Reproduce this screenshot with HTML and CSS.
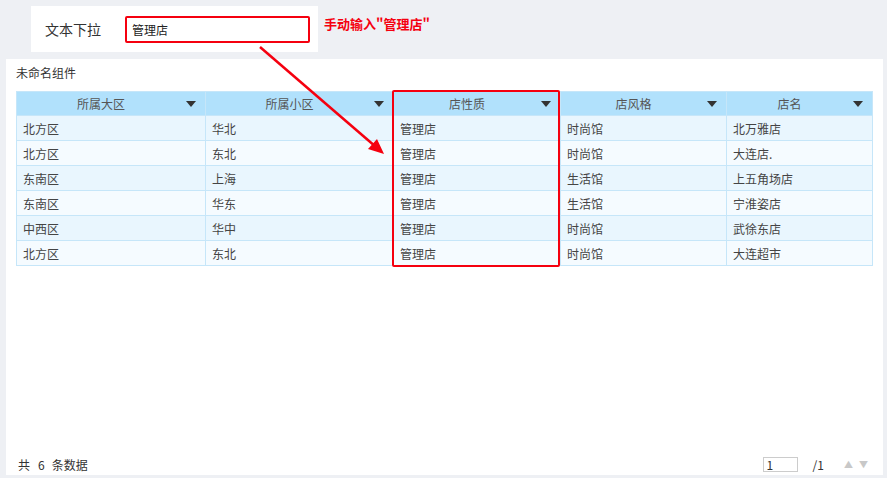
FILE: index.html
```html
<!DOCTYPE html>
<html lang="zh-CN">
<head>
  <meta charset="UTF-8">
  <title>文本下拉</title>
  <link rel="stylesheet" href="styles.css">
</head>
<body>

  <div class="filter-bar">
    <div class="filter-box">
      <span class="filter-label">文本下拉</span>
      <div class="filter-input">管理店</div>
    </div>
    <span class="note">手动输入"管理店"</span>
  </div>

  <div class="panel">
    <div class="panel-title">未命名组件</div>
    <table class="grid">
      <colgroup>
        <col style="width:189px">
        <col style="width:188px">
        <col style="width:167px">
        <col style="width:166px">
        <col style="width:146px">
      </colgroup>
      <thead>
        <tr>
          <th>所属大区<i class="caret"></i></th>
          <th>所属小区<i class="caret"></i></th>
          <th>店性质<i class="caret"></i></th>
          <th>店风格<i class="caret"></i></th>
          <th>店名<i class="caret"></i></th>
        </tr>
      </thead>
      <tbody>
        <tr><td>北方区</td><td>华北</td><td>管理店</td><td>时尚馆</td><td>北万雅店</td></tr>
        <tr><td>北方区</td><td>东北</td><td>管理店</td><td>时尚馆</td><td>大连店.</td></tr>
        <tr><td>东南区</td><td>上海</td><td>管理店</td><td>生活馆</td><td>上五角场店</td></tr>
        <tr><td>东南区</td><td>华东</td><td>管理店</td><td>生活馆</td><td>宁淮姿店</td></tr>
        <tr><td>中西区</td><td>华中</td><td>管理店</td><td>时尚馆</td><td>武徐东店</td></tr>
        <tr><td>北方区</td><td>东北</td><td>管理店</td><td>时尚馆</td><td>大连超市</td></tr>
      </tbody>
    </table>

    <div class="pager">
      <span class="count">共<b>6</b>条数据</span>
      <div class="pages">
        <span class="page-input">1</span>
        <span class="page-total">/1</span>
        <span class="page-arrow">▲</span>
        <span class="page-arrow">▼</span>
      </div>
    </div>
  </div>

  <!-- 标注：红框 + 箭头 -->
  <div class="mark-col"></div>
  <svg class="mark-arrow" width="887" height="478" viewBox="0 0 887 478">
    <line x1="260" y1="47" x2="376" y2="147" stroke="#f5000f" stroke-width="2.5"/>
    <polygon points="384,154 368,149 377,139" fill="#f5000f"/>
  </svg>

</body>
</html>
```

FILE: styles.css
```css
body {
  margin: 0;
  width: 887px;
  height: 478px;
  background-color: #eef0f4;
  font-family: "Noto Sans CJK SC", "Noto Sans", sans-serif;
  color: #333;
  overflow: hidden;
  position: relative;
}

.filter-bar {
  display: flex;
  align-items: flex-start;
  padding: 6px 0 0 31px;
}

.filter-box {
  display: flex;
  align-items: center;
  width: 287px;
  height: 46px;
  background-color: #fff;
  box-sizing: border-box;
  padding-left: 14px;
}

.filter-label {
  font-size: 14px;
  color: #333;
  width: 80px;
}

.filter-input {
  width: 185px;
  height: 27px;
  box-sizing: border-box;
  border: 2px solid #f5000f;
  border-radius: 2px;
  font-size: 12px;
  line-height: 23px;
  padding-left: 5px;
  color: #222;
}

.note {
  margin: 8px 0 0 6px;
  font-size: 13px;
  font-weight: bold;
  color: #f5000f;
}

.panel {
  margin: 7px 4px 0 6px;
  height: 416px;
  background-color: #fff;
  box-sizing: border-box;
  padding: 5px 11px 1px 10px;
  display: flex;
  flex-direction: column;
}

.panel-title {
  font-size: 12px;
  line-height: 17px;
  color: #333;
}

.grid {
  margin-top: 10px;
  width: 856px;
  border-collapse: collapse;
  table-layout: fixed;
  font-size: 12px;
}

.grid th,
.grid td {
  height: 24px;
  border: 1px solid #c6e6f9;
  padding: 0 6px;
  white-space: nowrap;
}

.grid th {
  height: 23px;
  padding-right: 26px;
  background-color: #b1e1fc;
  font-weight: normal;
  color: #555;
  text-align: center;
  position: relative;
}

.grid td {
  color: #444;
  text-align: left;
}

.grid tbody tr:nth-child(odd) td {
  background-color: #e9f6fe;
}

.grid tbody tr:nth-child(even) td {
  background-color: #f5fbff;
}

.caret {
  position: absolute;
  right: 9px;
  top: 9px;
  width: 0;
  height: 0;
  border-left: 5px solid transparent;
  border-right: 5px solid transparent;
  border-top: 6px solid #333;
}

.pager {
  margin-top: auto;
  display: flex;
  justify-content: space-between;
  align-items: center;
  height: 20px;
  padding-left: 2px;
  font-size: 12px;
  color: #333;
}

.count b {
  font-weight: normal;
  margin: 0 7px 0 8px;
}

.pages {
  display: flex;
  align-items: center;
  margin-right: 4px;
}

.page-input {
  width: 35px;
  height: 15px;
  box-sizing: border-box;
  border: 1px solid #ccc;
  font-size: 12px;
  line-height: 13px;
  padding-left: 3px;
}

.page-total {
  margin: 0 14px 0 15px;
}

.page-arrow {
  font-size: 9px;
  color: #c8c8c8;
  margin-left: 6px;
}

.mark-col {
  position: absolute;
  left: 392px;
  top: 90px;
  width: 168px;
  height: 177px;
  box-sizing: border-box;
  border: 2px solid #f5000f;
  border-radius: 2px;
}

.mark-arrow {
  position: absolute;
  left: 0;
  top: 0;
  pointer-events: none;
}
```
